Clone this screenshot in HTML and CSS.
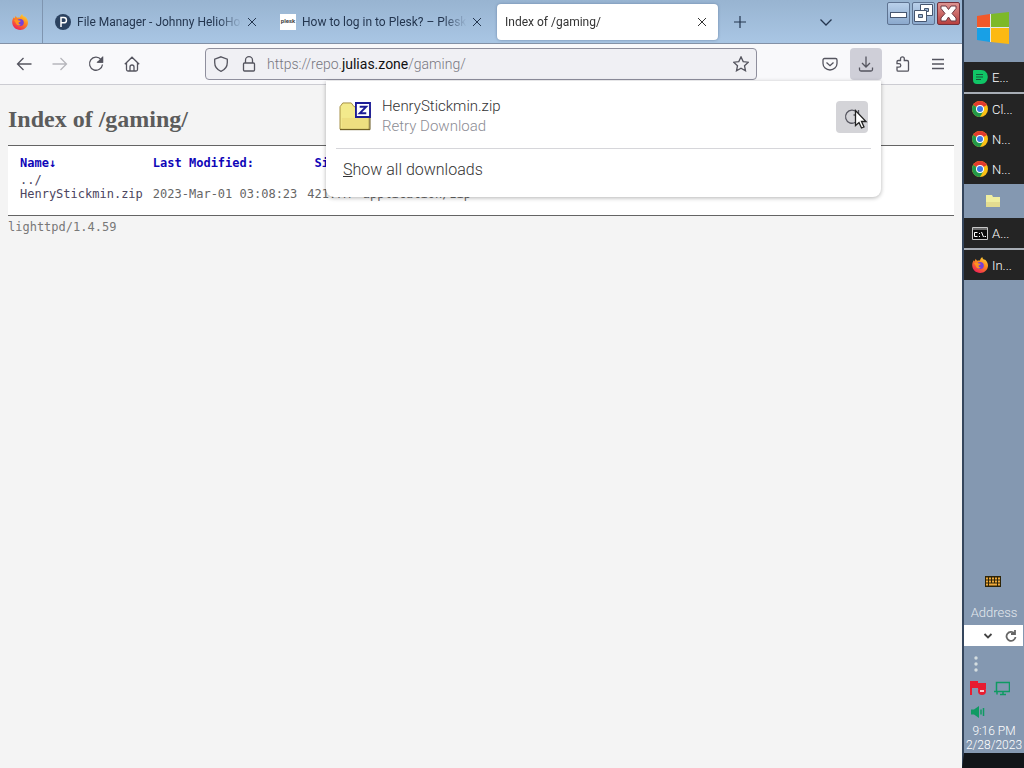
FILE: index.html
```
<!DOCTYPE html>
<html lang="en">
<head>
  <meta charset="UTF-8" />
  <meta name="viewport" content="width=device-width, initial-scale=1.0" />
  <title>Index of /gaming/</title>
  <link rel="stylesheet" href="styles.css">
</head>
<body>
  <!-- shared icons -->
  <svg class="defs" width="0" height="0">
    <defs>
      <linearGradient id="fox" x1="0.9" y1="0" x2="0.3" y2="1">
        <stop offset="0" stop-color="#ffe23d" />
        <stop offset="0.45" stop-color="#ff8a1e" />
        <stop offset="1" stop-color="#ee1f56" />
      </linearGradient>
      <symbol id="firefox" viewBox="0 0 16 16">
        <path fill="url(#fox)" d="M10.3 0c.1 1.400 1 2 2 3l.3-.7C14.500 3.800 16 6 16 8.500 16 12.800 12.500 16 8.200 16 3.700 16 .2 12.700.2 8.300c0-2 .6-3.700 1.600-5l.5 1.100C3 3.300 3.400 2.500 3.800 1.700c.3 1 .7 1.700 1.400 2C6.400 3.300 7 3.400 8 3.600 8.300 2.200 9 .9 10.300 0z" />
        <circle cx="8.200" cy="8.500" r="3.600" fill="#7540d8" />
        <path fill="#ff9320" d="M2 6.300c1.500-1.300 3.300-1.100 4.800.1 1 .1 1.800.1 2 .6-.2.900-1.800 1-2.200 1.600-.2 1.200.8 2 2.200 1.900-1.300 1.600-4.500 1.200-5-1.400z" />
      </symbol>
      <symbol id="chrome" viewBox="0 0 16 16">
        <circle cx="8" cy="8" r="8" fill="#fbc116" />
        <path fill="#e33b2e" d="M8 8L1.100 4A8 8 0 0 1 14.900 4z" />
        <path fill="#229a49" d="M1.100 4A8 8 0 0 0 8 16l3.500-6z" />
        <circle cx="8" cy="8" r="4" fill="#fff" />
        <circle cx="8" cy="8" r="3" fill="#3b78e7" />
      </symbol>
      <symbol id="close" viewBox="0 0 10 10">
        <path d="M1 1l8 8M9 1l-8 8" fill="none" stroke="currentColor" />
      </symbol>
    </defs>
  </svg>

  <div class="desktop">
    <div class="browser">
      <header class="tabbar">
        <button class="tab pinned" aria-label="Pinned tab"><svg width="16" height="16"><use href="#firefox" /></svg></button>
        <div class="tab">
          <svg class="favicon" width="16" height="16" viewBox="0 0 16 16"><circle cx="8" cy="8" r="8" fill="#2b4260" /><path d="M6 13V3.500h2.800a2.600 2.600 0 0 1 0 5.300H6" fill="none" stroke="#fff" stroke-width="1.500" /></svg>
          <span class="tab-title">File Manager - Johnny HelioHost</span>
          <button class="tab-close" aria-label="Close tab"><svg width="10" height="10"><use href="#close" /></svg></button>
        </div>
        <div class="tab">
          <span class="favicon plesk">plesk</span>
          <span class="tab-title">How to log in to Plesk? – Plesk</span>
          <button class="tab-close" aria-label="Close tab"><svg width="10" height="10"><use href="#close" /></svg></button>
        </div>
        <div class="tab active">
          <span class="tab-title">Index of /gaming/</span>
          <button class="tab-close" aria-label="Close tab"><svg width="10" height="10"><use href="#close" /></svg></button>
        </div>
        <button class="new-tab" aria-label="New tab"><svg width="14" height="14" viewBox="0 0 14 14"><path d="M7 1v12M1 7h12" stroke="currentColor" stroke-width="1.200" /></svg></button>
        <button class="list-tabs" aria-label="List all tabs"><svg width="14" height="14" viewBox="0 0 14 14"><path d="M1.500 4.500L7 10l5.500-5.500" fill="none" stroke="currentColor" stroke-width="1.300" /></svg></button>
        <div class="caption">
          <button aria-label="Minimize"><svg width="21" height="21" viewBox="0 0 21 21"><rect x="2.500" y="9.500" width="16" height="5" fill="#fff" stroke="#46566f" /></svg></button>
          <button aria-label="Restore"><svg width="21" height="21" viewBox="0 0 21 21"><path d="M7.500 1.500h12v11h-12z" fill="#fff" stroke="#46566f" /><path d="M11.500 5.500h4v3h-4z" fill="#9db8d6" stroke="#46566f" /><path d="M1.500 7.500h12v11h-12z" fill="#fff" stroke="#46566f" /><path d="M5.500 11.500h4v3h-4z" fill="#9db8d6" stroke="#46566f" /></svg></button>
          <button class="close" aria-label="Close"><svg width="21" height="21" viewBox="0 0 21 21"><path d="M3 3h5l2.500 3.500L13 3h5v2.500L14 10.500l4 4.500v3h-5l-2.500-4L8 18H3v-3l4-4.500-4-5z" fill="#fff" stroke="#6b3a44" /></svg></button>
        </div>
      </header>

      <nav class="toolbar">
        <div class="nav-buttons">
          <button class="tool" aria-label="Back"><svg width="16" height="16" viewBox="0 0 16 16"><path d="M15.500 8H1.500M7.500 2L1.500 8l6 6" /></svg></button>
          <button class="tool" aria-label="Forward" disabled><svg width="16" height="16" viewBox="0 0 16 16"><path d="M.5 8h14M8.500 2l6 6-6 6" /></svg></button>
          <button class="tool" aria-label="Reload"><svg width="16" height="16" viewBox="0 0 16 16"><path d="M13 3.500A6.500 6.500 0 1 0 14.500 8.500M14.500 1v5h-5" /><path class="solid" d="M14.500 1.500V6H10z" /></svg></button>
          <button class="tool" aria-label="Home"><svg width="16" height="16" viewBox="0 0 16 16"><path d="M.8 8.300L8 1.200l7.200 7.100M2.500 7v6.500a1.500 1.500 0 0 0 1.500 1.500h8a1.500 1.500 0 0 0 1.500-1.500V7M6 15v-4a2 2 0 0 1 4 0v4" /></svg></button>
        </div>
        <div class="urlbar">
          <svg width="16" height="16" viewBox="0 0 16 16"><path d="M8 .8l6.300 2.400v3.300c0 4-2.500 7.300-6.300 8.800-3.800-1.500-6.300-4.800-6.300-8.800V3.200z" /></svg>
          <svg width="16" height="16" viewBox="0 0 16 16"><path d="M4.500 7V4.200a3.500 3.500 0 0 1 7 0V7M3.500 7h9a1 1 0 0 1 1 1v6a1 1 0 0 1-1 1h-9a1 1 0 0 1-1-1V8a1 1 0 0 1 1-1z" /></svg>
          <div class="url">https://repo.<b>julias.zone</b>/gaming/</div>
          <button class="star" aria-label="Bookmark this page"><svg width="16" height="16" viewBox="0 0 16 16"><path d="M8 .9l2.200 4.700 5.100.6-3.800 3.500 1 5.100L8 12.300l-4.500 2.500 1-5.100L.7 6.200l5.100-.6z" /></svg></button>
        </div>
        <div class="actions">
          <button class="tool" aria-label="Save to Pocket"><svg width="16" height="16" viewBox="0 0 16 16"><path d="M2.500 2.500h11a1.500 1.500 0 0 1 1.500 1.500v3.500a7 6.500 0 0 1-14 0V4a1.500 1.500 0 0 1 1.500-1.500zM4.500 6.500L8 9.700l3.500-3.200" /></svg></button>
          <button class="tool pressed" aria-label="Downloads"><svg width="16" height="16" viewBox="0 0 16 16"><path d="M8 .5v10M4 7l4 4 4-4M1.500 11.500v2a1.500 1.500 0 0 0 1.500 1.500h10a1.500 1.500 0 0 0 1.500-1.500v-2" /></svg></button>
          <button class="tool" aria-label="Extensions"><svg width="16" height="16" viewBox="0 0 16 16"><path d="M6.500 4.500V2.800a1.900 1.900 0 0 1 3.800 0v1.700H13a1.500 1.500 0 0 1 1.500 1.500v8a1.200 1.200 0 0 1-1.200 1.200H4.200A1.200 1.200 0 0 1 3 14v-2.800h2a1.800 1.800 0 0 0 0-3.600H3V5.700a1.200 1.200 0 0 1 1.200-1.200z" /></svg></button>
          <button class="tool" aria-label="Menu"><svg width="16" height="16" viewBox="0 0 16 16"><path d="M2 3.500h12M2 8h12M2 12.500h12" /></svg></button>
        </div>

        <div class="downloads">
          <div class="download">
            <svg width="32" height="30" viewBox="0 0 34 32">
              <path d="M1 29V5l3-4h9l3 4h16v24z" fill="#f3ea8c" stroke="#a08a3c" />
              <path d="M1 29.500h32V6" fill="none" stroke="#5d4c10" />
              <path d="M3 17h28v11H3z" fill="#eedf80" />
              <path d="M18 1h15v15H18z" fill="#fff" stroke="#1c1c96" stroke-width="2" />
              <path d="M22 5h7l-7 7h7" fill="none" stroke="#1c1c96" stroke-width="2" />
            </svg>
            <div class="download-text">
              <div>HenryStickmin.zip</div>
              <div class="status">Retry Download</div>
            </div>
            <button class="retry" aria-label="Retry">
              <svg width="16" height="16" viewBox="0 0 16 16"><path d="M13 3.500A6.500 6.500 0 1 0 14.500 8.500M14.500 1v5h-5" /></svg>
              <svg class="cursor" width="14" height="21" viewBox="0 0 14 21"><path d="M1.500 1.500v15l3.500-3 2.500 5.500 2.500-1-2.500-5.500H12z" /></svg>
            </button>
          </div>
          <button class="show-all"><u>S</u>how all downloads</button>
        </div>
      </nav>

      <main class="page">
        <h2>Index of /gaming/</h2>
        <div class="list">
          <table>
            <thead>
              <tr><th><a href="#">Name↓</a></th><th><a href="#">Last Modified:</a></th><th class="size"><a href="#">Size:</a></th><th><a href="#">Type:</a></th></tr>
            </thead>
            <tbody>
              <tr class="up"><td><a href="#">../</a></td><td></td><td></td><td></td></tr>
              <tr><td><a href="#">HenryStickmin.zip</a></td><td>2023-Mar-01 03:08:23</td><td class="size">421.7M</td><td>application/zip</td></tr>
            </tbody>
          </table>
        </div>
        <div class="foot">lighttpd/1.4.59</div>
      </main>
    </div>

    <aside class="taskbar">
      <button class="start" aria-label="Start">
        <svg width="34" height="34" viewBox="0 0 34 34">
          <path d="M1 4l13-2v13H1z" fill="#f1592a" /><path d="M15 2l18-2v15H15z" fill="#7db928" />
          <path d="M1 16h13v14L1 28z" fill="#18a0e6" /><path d="M15 16h18v16l-18-2z" fill="#fcb912" />
          <path d="M14.500 2v28M1 15.500h32" stroke="#e4e8e6" />
        </svg>
      </button>
      <button class="task split"><svg width="16" height="16" viewBox="0 0 16 16"><path d="M2 1h7c9 0 9 14 0 14H5a4 4 0 0 1-4-4V2a1 1 0 0 1 1-1z" fill="#10c566" /><path d="M4 5.500h7M4 8h7M4 10.500h5" stroke="#135c38" /></svg>E...</button>
      <button class="task"><svg width="16" height="16"><use href="#chrome" /></svg>Cl...</button>
      <button class="task"><svg width="16" height="16"><use href="#chrome" /></svg>N...</button>
      <button class="task"><svg width="16" height="16"><use href="#chrome" /></svg>N...</button>
      <button class="folder" aria-label="File Explorer"><svg width="16" height="14" viewBox="0 0 16 14"><path d="M1 1h6l1 2h7v10H1z" fill="#efeea0" /><path d="M1 8h14v5H1z" fill="#e3dc90" /></svg></button>
      <button class="task split"><svg width="16" height="13" viewBox="0 0 16 13"><path d="M.5.5h15v12H.5z" fill="#0a0a0a" stroke="#c8c8c8" /><path d="M1 2h14" stroke="#c8c8c8" /><path d="M5.500 5.500h-3v4h3M7.500 6v1M7.500 9v1M9.500 5l2 5M12.500 9.500H14" fill="none" stroke="#fff" /></svg>A...</button>
      <button class="task"><svg width="16" height="16"><use href="#firefox" /></svg>In...</button>

      <div class="tray">
        <button class="keyboard" aria-label="Touch keyboard"><svg width="16" height="11" viewBox="0 0 16 11"><path d="M0 0h16v11H0z" fill="#2e2408" /><path d="M1 2.500h14M1 5.500h14" stroke="#f0a93a" stroke-width="2" stroke-dasharray="2 1" /><path d="M1 8.500h2M4 8.500h8M13 8.500h2" stroke="#f0a93a" stroke-width="2" /></svg></button>
        <div class="address-label">Address</div>
        <div class="address">
          <button aria-label="Previous locations"><svg width="10" height="10" viewBox="0 0 10 10"><path d="M1.500 3L5 6.500 8.500 3" fill="none" stroke="#444" stroke-width="1.800" /></svg></button>
          <button aria-label="Refresh"><svg width="12" height="12" viewBox="0 0 12 12"><path d="M9.500 3.500A4.500 4.500 0 1 0 10.500 7M10 0v4H6" fill="none" stroke="#666" stroke-width="1.800" /></svg></button>
        </div>
        <div class="tray-icons">
          <svg width="16" height="16" viewBox="0 0 16 16"><g fill="#d5dde0"><circle cx="6" cy="2" r="1.700" /><circle cx="6" cy="8" r="1.700" /><circle cx="6" cy="14" r="1.700" /></g></svg>
          <span></span>
          <svg width="16" height="16" viewBox="0 0 16 16"><path d="M1 1v14" stroke="#e81c30" stroke-width="2" /><path d="M2 1h6v2h8v6H8V8H2z" fill="#e81c30" /><circle cx="12" cy="11" r="4" fill="#e81c30" /><path d="M10 11h4" stroke="#fff" stroke-width="1.500" /></svg>
          <svg width="16" height="16" viewBox="0 0 16 16"><path d="M2.500 2.500h13v9h-13zM9 11.500V15M6 14.500h6M0 11.500h3v3" fill="none" stroke="#0f9a63" stroke-width="1.500" /></svg>
          <svg width="16" height="16" viewBox="0 0 16 16"><path d="M1 5.500h3L9 2v12L4 10.500H1z" fill="#0f9a63" /><path d="M11 5.500v5M13.500 4v8" stroke="#0f9a63" stroke-width="1.500" /></svg>
        </div>
        <div class="clock">9:16 PM<br>2/28/2023</div>
      </div>
    </aside>
  </div>
</body>
</html>
```

FILE: styles.css
```
* {
  box-sizing: border-box;
}
body {
  margin: 0;
  font-family: Roboto, "Liberation Sans", sans-serif;
  font-weight: 300;
  font-size: 14px;
  color: #333;
}
button {
  display: flex;
  align-items: center;
  justify-content: center;
  border: none;
  background: none;
  padding: 0;
  font: inherit;
  color: inherit;
}
svg {
  flex: none;
}
.defs {
  position: absolute;
}
.desktop {
  display: flex;
  min-height: 100vh;
}
.browser {
  flex: 1;
  min-width: 0;
  display: flex;
  flex-direction: column;
  background: #f4f4f4;
}

/* tabs */
.tabbar {
  display: flex;
  height: 44px;
  background: linear-gradient(#98b4d1, #a9c6e4);
  border-bottom: 1px solid #8391a6;
  color: #24364f;
}
.tab {
  display: flex;
  align-items: center;
  flex: 0 1 221px;
  min-width: 0;
  margin: 4px 2px 3px;
  padding: 0 10px 0 8px;
  border-radius: 4px;
}
.tab.pinned {
  flex: none;
  width: 43px;
  margin: 0 2px 0 0;
  padding: 0 2px 0 0;
  border-right: 1px solid #7f95b0;
  border-radius: 0;
}
.tab.active {
  background: #fff;
  color: #333;
  box-shadow: 0 0 3px #6d86a6;
}
.favicon {
  flex: none;
  width: 16px;
  height: 16px;
  margin-right: 6px;
}
.plesk {
  background: #fff;
  color: #444;
  font-size: 6px;
  font-weight: 700;
  line-height: 14px;
  text-align: center;
}
.tab-title {
  flex: 1;
  overflow: hidden;
  white-space: nowrap;
  font-size: 12px;
  font-weight: 400;
  mask-image: linear-gradient(to left, transparent, #000 24px);
}
.tab-close {
  margin-left: 4px;
  width: 12px;
  height: 20px;
}
.new-tab {
  width: 40px;
}
.list-tabs {
  width: 24px;
  margin-left: auto;
}
.caption {
  display: flex;
  gap: 2px;
  margin: 2px 2px 0 49px;
}
.caption button {
  width: 23px;
  height: 23px;
  background: linear-gradient(#b9d0ea, #8ba9cd);
  border: 1px solid #5e7391;
  border-radius: 2px;
}
.caption .close {
  background: linear-gradient(#dc9391, #b9403e);
  border-color: #72303b;
}

/* navigation toolbar */
.toolbar {
  position: relative;
  display: flex;
  align-items: center;
  justify-content: space-between;
  height: 41px;
  padding: 0 8px;
  background: #f9f9fb;
  border-bottom: 1px solid #ccccd2;
}
.tool path, .urlbar path, .retry path {
  fill: none;
  stroke: #55555f;
  stroke-width: 1.3;
}
.tool .solid {
  fill: #55555f;
}
.nav-buttons, .actions {
  display: flex;
  gap: 4px;
}
.tool, .retry {
  width: 32px;
  height: 32px;
  border-radius: 4px;
}
.tool:disabled {
  opacity: 0.4;
}
.pressed {
  background: #cfcfd8;
}
.urlbar {
  display: flex;
  align-items: center;
  gap: 12px;
  flex: 0 1 552px;
  height: 32px;
  padding: 0 7px;
  background: #f0f0f4;
  border: 1px solid #8f8f9d;
  border-radius: 4px;
}
.url {
  flex: 1;
  margin-left: -2px;
  color: #77777f;
}
.url b {
  font-weight: 400;
  color: #111;
}

/* downloads panel */
.downloads {
  position: absolute;
  z-index: 2;
  top: 37px;
  right: 81px;
  width: 555px;
  padding: 8px 10px;
  background: #fff;
  border-radius: 0 0 8px 8px;
  box-shadow: 0 1px 4px rgba(0, 0, 0, 0.3);
  font-size: 15px;
}
.download {
  display: flex;
  align-items: center;
  height: 60px;
  padding: 0 3px 4px;
  border-bottom: 1px solid #d6d6da;
}
.download-text {
  flex: 1;
  margin-left: 11px;
  padding-bottom: 2px;
  line-height: 20px;
}
.status {
  color: #8c8c94;
}
.retry {
  position: relative;
  background: #d4d4d8;
}
.retry .cursor {
  position: absolute;
  left: 18px;
  top: 8px;
}
.retry .cursor path {
  fill: #fff;
  stroke: #222;
}
.show-all {
  justify-content: flex-start;
  width: 100%;
  height: 40px;
  padding: 0 7px;
  font-size: 16px;
  white-space: pre;
}

/* directory listing */
.page {
  padding: 0 8px;
  font-family: "DejaVu Sans Mono", "Liberation Mono", monospace;
  font-size: 12px;
  font-weight: 400;
  color: #666;
}
.page h2 {
  margin: 20px 0 12px;
  font-family: "Liberation Serif", serif;
  font-size: 24px;
  line-height: 28px;
  color: #5c5c5c;
}
.list {
  padding: 10px 12px 14px;
  background: #fff;
  border-top: 1px solid #646464;
  border-bottom: 1px solid #646464;
}
.list table {
  border-spacing: 0;
}
.list th, .list td {
  padding: 0 10px 0 0;
  line-height: 14px;
  text-align: left;
  white-space: nowrap;
}
.list th {
  padding-bottom: 3px;
}
.list .size {
  padding-right: 12px;
  text-align: right;
}
.list a {
  color: #4c4560;
  text-decoration: none;
}
.list th a {
  color: #1006b8;
}
.foot {
  padding-top: 4px;
  line-height: 14px;
  color: #787878;
}

/* taskbar */
.taskbar {
  display: flex;
  flex-direction: column;
  width: 62px;
  background: #8498b1;
  border-left: 2px solid #34455c;
  border-bottom: 15px solid #111418;
  color: #fff;
  font-size: 13px;
}
.start {
  height: 62px;
  padding-right: 2px;
  padding-bottom: 4px;
}
.task {
  justify-content: flex-start;
  gap: 4px;
  height: 30px;
  padding-left: 8px;
  background: #242424;
}
.split {
  height: 32px;
  border-bottom: 2px solid #a7adb5;
}
.folder {
  height: 34px;
  padding-right: 2px;
}
.tray {
  display: flex;
  flex-direction: column;
  margin-top: auto;
  text-align: center;
}
.keyboard {
  padding-right: 2px;
}
.address-label {
  margin: 18px 0 4px;
  line-height: 16px;
  color: #e3e8ee;
}
.address {
  display: flex;
  align-items: center;
  justify-content: flex-end;
  gap: 12px;
  height: 21px;
  margin-right: 1px;
  padding-right: 6px;
  background: #fff;
}
.tray-icons {
  display: grid;
  grid-template-columns: 16px 16px;
  gap: 8px;
  padding: 10px 8px 4px 6px;
}
.clock {
  padding-bottom: 1px;
  line-height: 14px;
  font-size: 12px;
}
```
